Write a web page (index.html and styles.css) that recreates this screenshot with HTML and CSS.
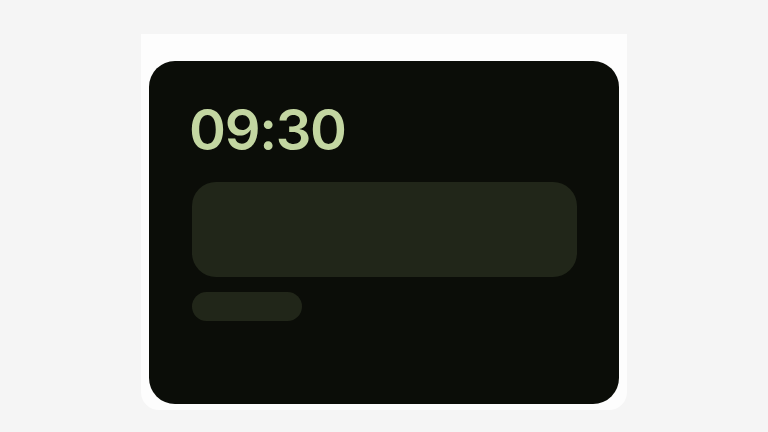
FILE: index.html
```html
<!DOCTYPE html>
<html>
<head>
<meta charset="utf-8">
<link rel="stylesheet" href="styles.css">
</head>
<body>
<div class="stage">
  <div class="sheet">
    <div class="panel">
      <div class="time">09:30</div>
      <div class="block"></div>
      <div class="pill"></div>
    </div>
  </div>
</div>
</body>
</html>
```
FILE: styles.css
```css
html, body {
  margin: 0;
  padding: 0;
  background: #f5f5f5;
  width: 768px;
  height: 432px;
  overflow: hidden;
}
.stage {
  display: flex;
  padding-left: 141px;
  padding-top: 34px;
}
.sheet {
  width: 486px;
  height: 376px;
  box-sizing: border-box;
  padding: 27px 8px 6px 8px;
  background: #fdfdfd;
  border-radius: 0 0 18px 18px;
}
.panel {
  height: 100%;
  box-sizing: border-box;
  background: #0b0d08;
  border-radius: 26px;
  padding: 38px 42px 0 43px;
  display: flex;
  flex-direction: column;
}
.time {
  margin-left: -3px;
  font-family: "Inter", "Noto Sans", sans-serif;
  font-weight: 600;
  font-size: 56px;
  line-height: 62px;
  letter-spacing: -1.3px;
  color: #c3d6a1;
}
.block {
  margin-top: 21px;
  height: 95px;
  border-radius: 24px;
  background: #212619;
}
.pill {
  margin-top: 15px;
  width: 110px;
  height: 29px;
  border-radius: 15px;
  background: #212619;
}
```
